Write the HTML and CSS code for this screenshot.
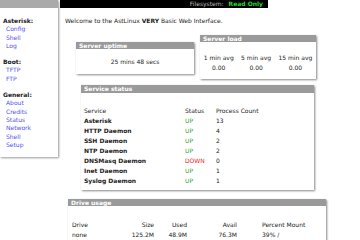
FILE: index.html
```html
<!DOCTYPE html>
<html lang="en">
<head>
    <meta charset="UTF-8">
    <title>AstLinux Web Interface</title>
    <link rel="stylesheet" href="styles.css">
</head>
<body>
<div class="page">
    <div class="sidebar">
        <div class="sidebar-top"></div>
        <div class="menu">
            <div class="menu-group">
                <div class="menu-title">Asterisk:</div>
                <a href="#" class="menu-item">Config</a>
                <a href="#" class="menu-item">Shell</a>
                <a href="#" class="menu-item">Log</a>
            </div>
            <div class="menu-group">
                <div class="menu-title">Boot:</div>
                <a href="#" class="menu-item">TFTP</a>
                <a href="#" class="menu-item">FTP</a>
            </div>
            <div class="menu-group">
                <div class="menu-title">General:</div>
                <a href="#" class="menu-item">About</a>
                <a href="#" class="menu-item">Credits</a>
                <a href="#" class="menu-item">Status</a>
                <a href="#" class="menu-item">Network</a>
                <a href="#" class="menu-item">Shell</a>
                <a href="#" class="menu-item">Setup</a>
            </div>
        </div>
    </div>

    <div class="main">
        <div class="topbar">
            <span class="fs-label">Filesystem:</span>
            <span class="fs-value">Read Only</span>
        </div>
        <div class="welcome">Welcome to the AstLinux <b>VERY</b> Basic Web Interface.</div>

        <div class="row">
            <div class="box box-uptime">
                <div class="box-title">Server uptime</div>
                <div class="uptime">25 mins 48 secs</div>
            </div>
            <div class="box box-load">
                <div class="box-title">Server load</div>
                <div class="load">
                    <div class="load-col"><div>1 min avg</div><div>0.00</div></div>
                    <div class="load-col"><div>5 min avg</div><div>0.00</div></div>
                    <div class="load-col"><div>15 min avg</div><div>0.00</div></div>
                </div>
            </div>
        </div>

        <div class="box box-service">
            <div class="box-title">Service status</div>
            <table class="services">
                <tr><td>Service</td><td>Status</td><td>Process Count</td></tr>
                <tr><td class="name">Asterisk</td><td class="up">UP</td><td>13</td></tr>
                <tr><td class="name">HTTP Daemon</td><td class="up">UP</td><td>4</td></tr>
                <tr><td class="name">SSH Daemon</td><td class="up">UP</td><td>2</td></tr>
                <tr><td class="name">NTP Daemon</td><td class="up">UP</td><td>2</td></tr>
                <tr><td class="name">DNSMasq Daemon</td><td class="down">DOWN</td><td>0</td></tr>
                <tr><td class="name">Inet Daemon</td><td class="up">UP</td><td>1</td></tr>
                <tr><td class="name">Syslog Daemon</td><td class="up">UP</td><td>1</td></tr>
            </table>
        </div>

        <div class="box box-drive">
            <div class="box-title">Drive usage</div>
            <div class="drives">
                <span>Drive</span><span class="num">Size</span><span class="num">Used</span><span class="num">Avail</span><span class="mount">Percent Mount</span>
                <span>none</span><span class="num">125.2M</span><span class="num">48.9M</span><span class="num">76.3M</span><span class="mount">39% /</span>
            </div>
        </div>
    </div>
</div>
</body>
</html>
```

FILE: styles.css
```css
body {
    font-family: "DejaVu Sans", Verdana, sans-serif;
    font-size: 6px;
    margin: 0;
    padding: 0;
    background-color: #fff;
    color: #333;
    overflow: hidden;
}

.page {
    display: flex;
    align-items: flex-start;
    height: 240px;
}

.sidebar {
    width: 58px;
    height: 157px;
    flex-shrink: 0;
    background-color: #fff;
    box-shadow: 1px 1px 2px #999;
}

.sidebar-top {
    height: 8px;
    background-color: #aaa;
}

.menu {
    padding: 9px 0 0 3px;
    line-height: 8.3px;
}

.menu-group {
    display: flex;
    flex-direction: column;
    margin-bottom: 8px;
}

.menu-title {
    font-weight: bold;
    color: #222;
}

.menu-item {
    color: #5050f5;
    text-decoration: none;
    padding-left: 3px;
}

.main {
    flex: 1;
    padding-left: 2px;
}

.topbar {
    width: 208px;
    height: 8px;
    background-color: #000;
    text-align: right;
    line-height: 8px;
    box-sizing: border-box;
    padding-right: 5px;
}

.fs-label {
    color: #bbb;
    margin-right: 3px;
}

.fs-value {
    color: #22dd22;
    font-weight: bold;
}

.welcome {
    margin: 9px 0 0 5px;
    line-height: 8px;
    color: #222;
}

.row {
    display: flex;
    align-items: flex-start;
    margin-top: 10px;
}

.box {
    background-color: #fff;
    box-shadow: 1px 1px 2px #888;
}

.box-title {
    background-color: #9a9a9a;
    color: #fff;
    font-weight: bold;
    height: 7px;
    line-height: 7px;
    padding-left: 3px;
}

.box-uptime {
    width: 118px;
    margin: 7px 0 0 16px;
}

.uptime {
    height: 25px;
    line-height: 25px;
    text-align: center;
    color: #222;
}

.box-load {
    width: 116px;
    margin-left: 6px;
}

.load {
    display: flex;
    justify-content: space-around;
    height: 37px;
    padding-top: 11px;
    box-sizing: border-box;
    line-height: 10px;
    color: #222;
}

.load-col {
    text-align: center;
}

.box-service {
    width: 233px;
    margin: 6px 0 0 21px;
    padding-bottom: 4px;
}

.box-service .box-title {
    height: 8px;
    line-height: 8px;
}

.services {
    border-collapse: collapse;
    margin-top: 13px;
    color: #222;
    font-size: 6px;
}

.services td {
    padding: 0 0 0 3px;
    height: 10px;
    line-height: 10px;
}

.services td:nth-child(1) {
    width: 98px;
}

.services td:nth-child(2) {
    width: 28px;
}

.services .name {
    font-weight: bold;
}

.up {
    color: #33a033;
}

.down {
    color: #ee2222;
}

.box-drive {
    width: 258px;
    height: 60px;
    margin: 9px 0 0 8px;
}

.drives {
    display: grid;
    grid-template-columns: 40px 42px 33px 50px 1fr;
    padding: 14px 0 0 4px;
    line-height: 10px;
    color: #222;
}

.drives .num {
    text-align: right;
}

.drives .mount {
    padding-left: 25px;
}
```
